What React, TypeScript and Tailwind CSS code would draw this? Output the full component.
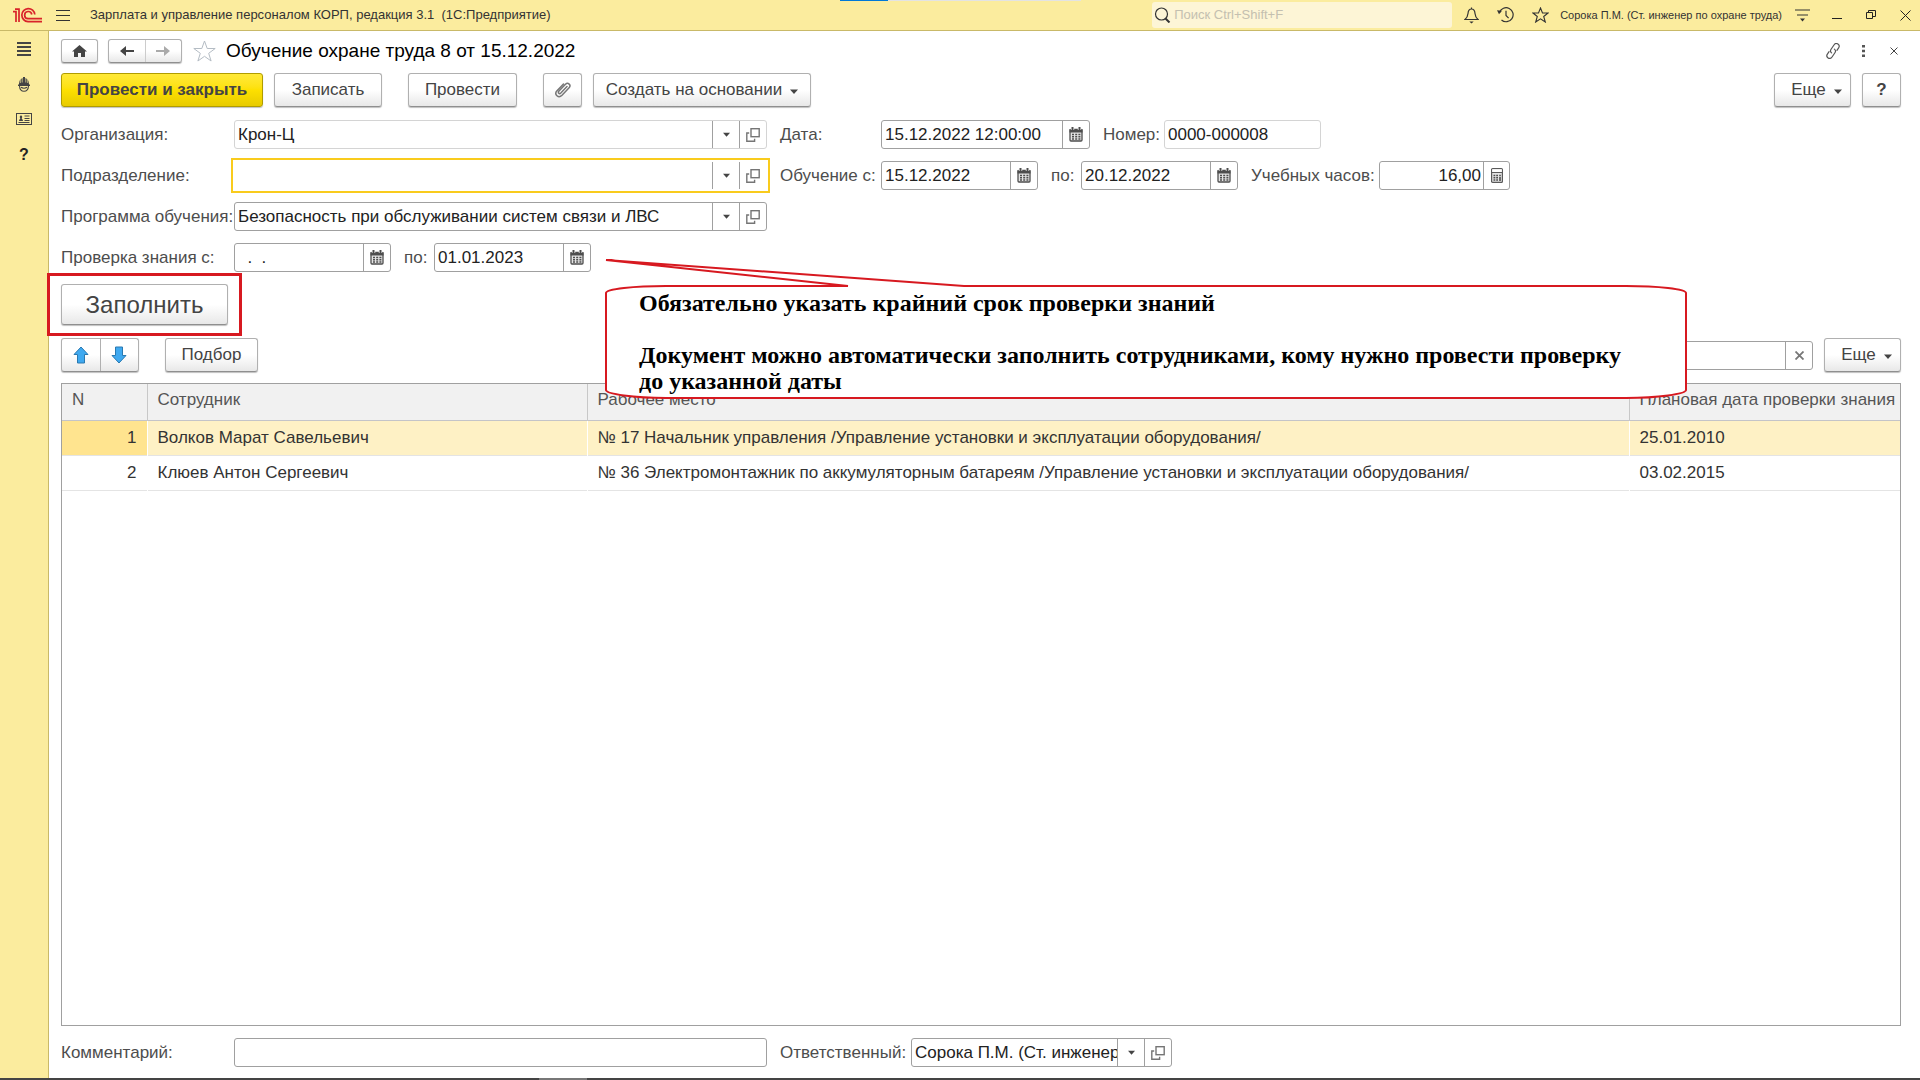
import type { ReactNode } from "react";

const fieldBorder = "border-[#a0a0a0]";
const btn =
  "flex h-[34px] shrink-0 items-center justify-center rounded-[3px] border border-[#b0b0b0] border-b-[#8f8f8f] bg-linear-to-b from-white from-50% to-[#e8e8e8] text-[#444] shadow-[0_1px_1px_rgba(0,0,0,0.25)]";

const rows = [
  {
    n: 1,
    name: "Волков Марат Савельевич",
    place: "№ 17 Начальник управления /Управление установки и эксплуатации оборудования/",
    date: "25.01.2010",
  },
  {
    n: 2,
    name: "Клюев Антон Сергеевич",
    place:
      "№ 36 Электромонтажник по аккумуляторным батареям /Управление установки и эксплуатации оборудования/",
    date: "03.02.2015",
  },
];

function Caret({ small = false }: { small?: boolean }) {
  return (
    <svg width={small ? 7 : 8} height={small ? 5 : 8} viewBox={small ? "0 0 8 5" : "0 -3 8 8"} fill="#444" aria-hidden="true">
      <path d="M0 0.5h8L4 5z" />
    </svg>
  );
}

function CalendarIcon() {
  return (
    <svg width="14" height="15" viewBox="0 0 14 15" aria-hidden="true">
      <rect x="1" y="2.5" width="12" height="11.5" rx="1" fill="#e4e4e4" stroke="#4d4d4d" strokeWidth="1.3" />
      <path d="M0.5 2h13v3.5h-13z" fill="#4d4d4d" />
      <path d="M3.5 0v3M10.5 0v3" stroke="#fff" strokeWidth="3.4" />
      <path d="M3.5 0v3.5M10.5 0v3.5" stroke="#4d4d4d" strokeWidth="2" />
      <path d="M3 7.5h8.5M3 9.8h8.5M3 12h8.5" stroke="#4d4d4d" strokeWidth="1.5" strokeDasharray="2 1.2" />
    </svg>
  );
}

function CalculatorIcon() {
  return (
    <svg width="12" height="15" viewBox="0 0 12 15" aria-hidden="true">
      <rect x="0.6" y="0.6" width="10.8" height="13.8" rx="1" fill="#e4e4e4" stroke="#5a5a5a" strokeWidth="1.2" />
      <path d="M1.2 1.200h9.600v2.800H1.200z" fill="#fff" />
      <path d="M1 4.5h10" stroke="#5a5a5a" />
      <path d="M2.5 7.5h4.5M2.5 9.8h4.5M2.5 12h4.5" stroke="#4d4d4d" strokeWidth="1.5" strokeDasharray="1.8 0.9" />
      <path d="M9 6.8v1.4M9 9v4" stroke="#4d4d4d" strokeWidth="1.6" />
    </svg>
  );
}

function OpenIcon() {
  return (
    <svg width="14" height="14" viewBox="0 0 14 14" fill="none" stroke="#757575" strokeWidth="1.4" aria-hidden="true">
      <rect x="5" y="0.7" width="8.2" height="8" />
      <path d="M3.2 5H0.8v8.2h7.8v-2.4" />
    </svg>
  );
}

type FieldProps = {
  id: string;
  label: string;
  value: string;
  width: string;
  labelWidth?: string;
  muted?: boolean;
  active?: boolean;
  right?: boolean;
  buttons?: { label: string; icon: ReactNode; width?: string }[];
};

function Field({ id, label, value, width, labelWidth = "", muted, active, right, buttons = [] }: FieldProps) {
  return (
    <div className="flex shrink-0 items-center">
      <label htmlFor={id} className={`shrink-0 whitespace-nowrap text-[#4d4d4d] ${labelWidth}`}>
        {label}
      </label>
      <div
        className={`flex h-[29px] overflow-hidden border bg-white ${width} ${
          active
            ? "border-transparent outline-2 outline-offset-1 outline-[#f9cb1d]"
            : muted
              ? "rounded-[3px] border-[#d4d4d4]"
              : `rounded-[3px] ${fieldBorder}`
        }`}
      >
        <input
          id={id}
          defaultValue={value}
          className={`min-w-0 flex-1 bg-transparent text-[#222] outline-none ${right ? "pr-[2px] text-right" : "pl-[3px]"}`}
        />
        {buttons.map((b) => (
          <button
            key={b.label}
            type="button"
            aria-label={b.label}
            className={`flex shrink-0 items-center justify-center border-l border-[#a0a0a0] ${b.width ?? "w-[27px]"}`}
          >
            {b.icon}
          </button>
        ))}
      </div>
    </div>
  );
}

const pick = [
  { label: "Выбрать", icon: <Caret small /> },
  { label: "Открыть", icon: <OpenIcon /> },
];
const calendar = [{ label: "Календарь", icon: <CalendarIcon /> }];
const calculator = [{ label: "Калькулятор", icon: <CalculatorIcon />, width: "w-[26px]" }];

function TopBar() {
  return (
    <header className="relative flex h-[31px] shrink-0 items-center border-b border-[#c9b968] bg-[#fbec9e] text-[13px] text-[#333]">
      <div className="absolute left-[840px] top-0 flex h-px w-[241px] bg-[#e3e3e3]">
        <span className="w-12 bg-[#0078d7]" />
      </div>
      <svg className="ml-3 shrink-0" width="30" height="18" viewBox="0 0 30 18" fill="none" stroke="#d8232a" strokeWidth="1.7" aria-label="1С">
        <path d="M1 5.6H4V16M3 3.200h4V16" />
        <path d="M22.8 8.500A6.500 6.500 0 1 0 16 15.600H30" />
        <path d="M19.800 8.500A3.600 3.600 0 1 0 16 12.700H30" />
      </svg>
      <button type="button" aria-label="Меню" className="ml-[14px]">
        <svg width="14" height="13" viewBox="0 0 14 13" stroke="#333" aria-hidden="true">
          <path d="M0 1.5h14M0 6.5h14M0 11.5h14" />
        </svg>
      </button>
      <span className="ml-5 whitespace-pre">Зарплата и управление персоналом КОРП, редакция 3.1  (1С:Предприятие)</span>

      <label className="ml-auto flex h-[26px] w-[300px] shrink-0 items-center rounded-[3px] bg-[#fdf5d6]">
        <svg className="ml-[2px]" width="17" height="16" viewBox="0 0 17 16" fill="none" stroke="#333" aria-hidden="true">
          <circle cx="7.5" cy="7" r="6" strokeWidth="1.2" />
          <path d="M11.5 11.5l4 4" strokeWidth="2" />
        </svg>
        <input aria-label="Поиск" placeholder="Поиск Ctrl+Shift+F" className="ml-[3px] min-w-0 flex-1 bg-transparent outline-none placeholder:text-[#c4c0b0]" />
      </label>
      <button type="button" aria-label="Уведомления" className="ml-[12px]">
        <svg width="15" height="17" viewBox="0 0 15 17" fill="none" stroke="#333" strokeWidth="1.2" aria-hidden="true">
          <path d="M7.5 0.5v1.5M1 12.500c2.300-2 2.800-3.500 3-6 0.200-3 1.500-4.500 3.500-4.500s3.300 1.500 3.500 4.500c0.200 2.500 0.700 4 3 6z" />
          <path d="M5.300 14.500h4.400l-2.200 2z" fill="#333" stroke="none" />
        </svg>
      </button>
      <button type="button" aria-label="История" className="ml-[18px]">
        <svg width="17" height="16" viewBox="0 0 17 16" fill="none" stroke="#333" strokeWidth="1.2" aria-hidden="true">
          <path d="M2.500 5.500A7 7 0 1 1 4.500 13M9 3.800V8.500l2.600 2.600" />
          <path d="M0 3.200l5 0.500-3 3.600z" fill="#333" stroke="none" />
        </svg>
      </button>
      <button type="button" aria-label="Избранное" className="ml-[18px]">
        <svg width="17" height="16" viewBox="0 0 17 16" fill="none" stroke="#333" strokeWidth="1.100" aria-hidden="true">
          <path d="M8.500 1l2 5h5.500l-4.300 3.500 1.600 5.500-4.800-3.200L3.700 15l1.600-5.500L1 6h5.500z" />
        </svg>
      </button>
      <span className="ml-[11px] whitespace-nowrap text-[11px]">Сорока П.М. (Ст. инженер по охране труда)</span>
      <button type="button" aria-label="Настройка" className="ml-[13px]">
        <svg width="15" height="13" viewBox="0 0 15 13" stroke="#333" strokeWidth="1.200" aria-hidden="true">
          <path d="M0 1h15M2 6h11" />
          <path d="M5 9.500h5l-2.500 3z" fill="#333" stroke="none" />
        </svg>
      </button>
      <button type="button" aria-label="Свернуть" className="ml-[22px]">
        <svg width="10" height="10" viewBox="0 0 10 10" stroke="#222" aria-hidden="true">
          <path d="M0 8.500h10" />
        </svg>
      </button>
      <button type="button" aria-label="Развернуть" className="ml-6">
        <svg width="10" height="10" viewBox="0 0 10 10" fill="none" stroke="#222" aria-hidden="true">
          <path d="M0.500 2.500h6v6h-6zM2.500 2.500v-2h7v6h-3" />
        </svg>
      </button>
      <button type="button" aria-label="Закрыть" className="ml-6 mr-[9px]">
        <svg width="11" height="11" viewBox="0 0 11 11" stroke="#222" aria-hidden="true">
          <path d="M0.500 0.500l10 10M10.500 0.500l-10 10" />
        </svg>
      </button>
    </header>
  );
}

function Sidebar() {
  return (
    <nav className="flex w-[49px] shrink-0 flex-col items-center border-r border-[#c9b968] bg-[#fbec9e] pt-[11px]">
      <button type="button" aria-label="Разделы">
        <svg width="14" height="14" viewBox="0 0 14 14" stroke="#444" strokeWidth="2" aria-hidden="true">
          <path d="M0 1h14M0 5h14M0 9h14M0 13h14" />
        </svg>
      </button>
      <button type="button" aria-label="Охрана труда" className="mt-[21px]">
        <svg width="12" height="15" viewBox="0 0 12 15" aria-hidden="true">
          <path d="M1 7.500C1 3.500 2.500 1 6 1s5 2.500 5 6.500h1V9H0V7.500z" fill="#444" />
          <path d="M4.200 0v5.500M7.800 0v5.500M2.300 1.500v4.500M9.700 1.500v4.500" stroke="#fbec9e" strokeWidth="0.700" />
          <path d="M5 0h2v4H5z" fill="#444" />
          <path d="M1.500 9c0.200 3.300 2 5.300 4.500 5.300s4.300-2 4.500-5.300M3 10.300c1.500 1.200 4.500 1.200 6 0" fill="none" stroke="#444" strokeWidth="1.100" />
        </svg>
      </button>
      <button type="button" aria-label="Кадры" className="mt-[21px]">
        <svg width="16" height="12" viewBox="0 0 16 12" fill="none" stroke="#444" aria-hidden="true">
          <rect x="0.500" y="0.500" width="15" height="11" />
          <path d="M8.500 3h5M8.500 5.500h5M8.500 7.500h5M2.500 9.500h11" />
          <path d="M3 8c0-1.500 1-2 1.300-2.500C3.500 4.500 3.500 2.500 5 2.500s1.500 2 0.700 3C6 6 7 6.500 7 8z" fill="#444" stroke="none" />
        </svg>
      </button>
      <button type="button" aria-label="Справка" className="mt-5 text-[16px] leading-5 font-bold text-[#222]">
        ?
      </button>
    </nav>
  );
}

function TitleRow() {
  return (
    <div className="flex h-6 items-center">
      <button type="button" aria-label="Начальная страница" className={`${btn} h-6! w-[37px]`}>
        <svg width="15" height="12" viewBox="0 0 15 12" fill="#444" aria-hidden="true">
          <path d="M7.500 0L0 6.500h2V12h4V8h3v4h4V6.500h2z" />
        </svg>
      </button>
      <div className={`${btn} ml-[10px] h-6! w-[74px]`}>
        <button type="button" aria-label="Назад" className="flex h-full flex-1 items-center justify-center border-r border-[#ccc]">
          <svg width="14" height="10" viewBox="0 0 14 10" aria-hidden="true">
            <path d="M14 4H6V0L0 5l6 5V6h8z" fill="#444" />
          </svg>
        </button>
        <button type="button" aria-label="Вперед" className="flex h-full flex-1 items-center justify-center">
          <svg width="14" height="10" viewBox="0 0 14 10" aria-hidden="true">
            <path d="M0 4h8V0l6 5-6 5V6H0z" fill="#aaa" />
          </svg>
        </button>
      </div>
      <button type="button" aria-label="В избранное" className="ml-[11px]">
        <svg width="23" height="22" viewBox="0 0 23 22" fill="none" stroke="#b4bcc4" aria-hidden="true">
          <path d="M11.500 1l2.700 7.500h8l-6.500 4.800 2.400 7.700-6.600-4.700L4.900 21l2.400-7.700L0.800 8.500h8z" />
        </svg>
      </button>
      <h1 className="ml-[10px] text-[19px] whitespace-nowrap text-black">Обучение охране труда 8 от 15.12.2022</h1>
      <button type="button" aria-label="Ссылка" className="ml-auto">
        <svg width="16" height="16" viewBox="0 0 24 24" fill="none" stroke="#555" strokeWidth="1.800" strokeLinecap="round" aria-hidden="true">
          <g transform="rotate(-8 12 12)">
            <path d="M9.500 14.500a4 4 0 0 1 0-5.500l5.500-6a4 4 0 0 1 6 5.500l-3 3.300" />
            <path d="M14.500 9.500a4 4 0 0 1 0 5.500l-5.500 6a4 4 0 0 1-6-5.500l3-3.300" />
          </g>
        </svg>
      </button>
      <button type="button" aria-label="Действия" className="ml-[21px]">
        <svg width="3" height="12" viewBox="0 0 3 12" fill="#555" aria-hidden="true">
          <path d="M0 0h3v2.500H0zM0 4.700h3v2.500H0zM0 9.400h3V12H0z" />
        </svg>
      </button>
      <button type="button" aria-label="Закрыть форму" className="ml-[25px] mr-[3px]">
        <svg width="8" height="8" viewBox="0 0 8 8" stroke="#444" aria-hidden="true">
          <path d="M0.500 0.500l7 7M7.500 0.500l-7 7" />
        </svg>
      </button>
    </div>
  );
}

function Callout() {
  return (
    <div className="absolute left-[604px] top-[259px] h-[141px] w-[1084px]">
      <svg className="absolute inset-0" width="1084" height="141" viewBox="0 0 1084 141" aria-hidden="true">
        <path
          d="M2 34C2 30 30 27 62 27H244L2 1L360 27H1022C1054 27 1082 30 1082 34V131C1082 135 1054 139 1022 139H62C30 139 2 135 2 131z"
          fill="#fff"
          stroke="#d71920"
          strokeWidth="2"
        />
      </svg>
      <p className="absolute left-[35px] top-[31px] w-[1000px] font-['Liberation_Serif',serif] text-[24px] leading-[26px] font-bold text-black">
        Обязательно указать крайний срок проверки знаний
        <br />
        <br />
        Документ можно автоматически заполнить сотрудниками, кому нужно провести проверку до указанной даты
      </p>
    </div>
  );
}

export default function App() {
  return (
    <div className="relative flex h-screen flex-col overflow-hidden bg-white font-['Liberation_Sans',Arial,sans-serif] text-[17px]">
      <TopBar />
      <div className="flex min-h-0 flex-1">
        <Sidebar />
        <main className="flex min-w-0 flex-1 flex-col pl-3 pr-[19px] pt-2">
          <TitleRow />

          <div className="mt-[10px] flex">
            <button
              type="button"
              className="flex h-[34px] w-[202px] items-center justify-center rounded-[3px] border border-[#b09c00] bg-linear-to-b from-[#ffe936] via-[#fde000] to-[#e8cb00] font-bold text-[#444] shadow-[0_1px_1px_rgba(0,0,0,0.25)]"
            >
              Провести и закрыть
            </button>
            <button type="button" className={`${btn} ml-[11px] w-[108px]`}>Записать</button>
            <button type="button" className={`${btn} ml-[26px] w-[109px]`}>Провести</button>
            <button type="button" aria-label="Файлы" className={`${btn} ml-[26px] w-[39px]`}>
              <svg width="18" height="18" viewBox="0 0 18 18" fill="none" stroke="#777" strokeWidth="1.500" strokeLinecap="round" aria-hidden="true">
                <path d="M13 5.500L6.800 12c-1.500 1.500-3.300-.300-2-1.700L11.500 3.300c2.500-2.500 6 .800 3.600 3.400L8 14.300c-3.500 3.500-8.300-.900-5-4.600L9.500 3" />
              </svg>
            </button>
            <button type="button" className={`${btn} ml-[11px] w-[218px] gap-2`}>
              Создать на основании <Caret />
            </button>
            <button type="button" className={`${btn} ml-auto w-[77px] gap-2 pl-2`}>
              Еще <Caret />
            </button>
            <button type="button" aria-label="Справка" className={`${btn} ml-[11px] w-[39px] font-bold`}>?</button>
          </div>

          <form className="mt-[13px] flex flex-col gap-3">
            <div className="flex gap-[13px]">
              <Field id="org" label="Организация:" value="Крон-Ц" labelWidth="w-[173px]" width="w-[533px]" muted buttons={pick} />
              <Field id="date" label="Дата:" value="15.12.2022 12:00:00" labelWidth="w-[101px]" width="w-[209px]" buttons={calendar} />
              <Field id="number" label="Номер:" value="0000-000008" labelWidth="w-[61px]" width="w-[157px]" muted />
            </div>
            <div className="flex gap-[13px]">
              <Field id="dept" label="Подразделение:" value="" labelWidth="w-[173px]" width="w-[533px]" active buttons={pick} />
              <Field id="from" label="Обучение с:" value="15.12.2022" labelWidth="w-[101px]" width="w-[157px]" buttons={calendar} />
              <Field id="to" label="по:" value="20.12.2022" labelWidth="w-[30px]" width="w-[157px]" buttons={calendar} />
              <Field id="hours" label="Учебных часов:" value="16,00" labelWidth="w-[128px]" width="w-[131px]" right buttons={calculator} />
            </div>
            <Field id="program" label="Программа обучения:" value="Безопасность при обслуживании систем связи и ЛВС" labelWidth="w-[173px]" width="w-[533px]" buttons={pick} />
            <div className="flex gap-[13px]">
              <Field id="checkFrom" label="Проверка знания с:" value="  .  ." labelWidth="w-[173px]" width="w-[157px]" buttons={calendar} />
              <Field id="checkTo" label="по:" value="01.01.2023" labelWidth="w-[30px]" width="w-[157px]" buttons={calendar} />
            </div>
          </form>

          <div className="relative mt-3 self-start">
            <button type="button" className={`${btn} h-[41px]! w-[167px] text-[24px]`}>
              Заполнить
            </button>
            <span className="pointer-events-none absolute -inset-x-[14px] -inset-y-[11px] border-3 border-[#d71920]" />
          </div>

          <div className="mt-[13px] flex items-center">
            <div className={`${btn} w-[78px]`}>
              <button type="button" aria-label="Вверх" className="flex h-full flex-1 items-center justify-center border-r border-[#b0b0b0]">
                <svg width="16" height="18" viewBox="0 0 16 18" fill="#3fa9f0" stroke="#2a79b0" aria-hidden="true">
                  <path d="M8 1L15 8.500H11.500V17H4.500V8.500H1z" />
                </svg>
              </button>
              <button type="button" aria-label="Вниз" className="flex h-full flex-1 items-center justify-center">
                <svg width="16" height="18" viewBox="0 0 16 18" fill="#3fa9f0" stroke="#2a79b0" aria-hidden="true">
                  <path d="M8 17L15 9.500H11.500V1H4.500V9.500H1z" />
                </svg>
              </button>
            </div>
            <button type="button" className={`${btn} ml-[26px] w-[93px]`}>Подбор</button>
            <div className="ml-auto flex h-[29px] w-[260px] rounded-[3px] border border-[#a0a0a0]">
              <input aria-label="Поиск по списку" className="min-w-0 flex-1 outline-none" />
              <button type="button" aria-label="Очистить" className="flex w-[27px] items-center justify-center border-l border-[#a0a0a0]">
                <svg width="9" height="9" viewBox="0 0 9 9" stroke="#777" strokeWidth="1.800" aria-hidden="true">
                  <path d="M0.500 0.500l8 8M8.500 0.500l-8 8" />
                </svg>
              </button>
            </div>
            <button type="button" className={`${btn} ml-[11px] w-[77px] gap-2 pl-2`}>
              Еще <Caret />
            </button>
          </div>

          <div className="mt-[11px] min-h-0 flex-1 border border-[#a0a0a0]">
            <table className="w-full table-fixed border-collapse text-left leading-6">
              <colgroup>
                <col className="w-[85px]" />
                <col className="w-[440px]" />
                <col />
                <col className="w-[271px]" />
              </colgroup>
              <thead>
                <tr className="h-[36px] border-b border-[#c4c4c8] bg-[#f1f1f1] align-top text-[#555]">
                  <th className="border-r border-[#c8c8c8] pt-1 pl-[10px] font-normal">N</th>
                  <th className="border-r border-[#c8c8c8] pt-1 pl-[10px] font-normal">Сотрудник</th>
                  <th className="border-r border-[#c8c8c8] pt-1 pl-[10px] font-normal">Рабочее место</th>
                  <th className="pt-1 pl-[10px] font-normal whitespace-nowrap">Плановая дата проверки знания</th>
                </tr>
              </thead>
              <tbody>
                {rows.map((row) => (
                  <tr key={row.n} className={`h-[35px] border-b border-[#e4e4e4] text-[#333] ${row.n === 1 ? "bg-[#fef1c5]" : ""}`}>
                    <td className={`border-r border-white pr-[10px] text-right ${row.n === 1 ? "bg-[#ffe48f]" : ""}`}>{row.n}</td>
                    <td className="border-r border-white pl-[10px]">{row.name}</td>
                    <td className="border-r border-white pl-[10px] whitespace-nowrap">{row.place}</td>
                    <td className="pl-[10px]">{row.date}</td>
                  </tr>
                ))}
              </tbody>
            </table>
          </div>

          <div className="mt-3 mb-[11px] flex gap-[13px]">
            <Field id="comment" label="Комментарий:" value="" labelWidth="w-[173px]" width="w-[533px]" />
            <Field id="responsible" label="Ответственный:" value="Сорока П.М. (Ст. инженер" labelWidth="w-[131px]" width="w-[261px]" buttons={pick} />
          </div>
        </main>
      </div>
      <div className="flex h-[2px] shrink-0 bg-[#444]">
        <span className="ml-[539px] w-12 bg-[#777]" />
      </div>
      <Callout />
    </div>
  );
}
